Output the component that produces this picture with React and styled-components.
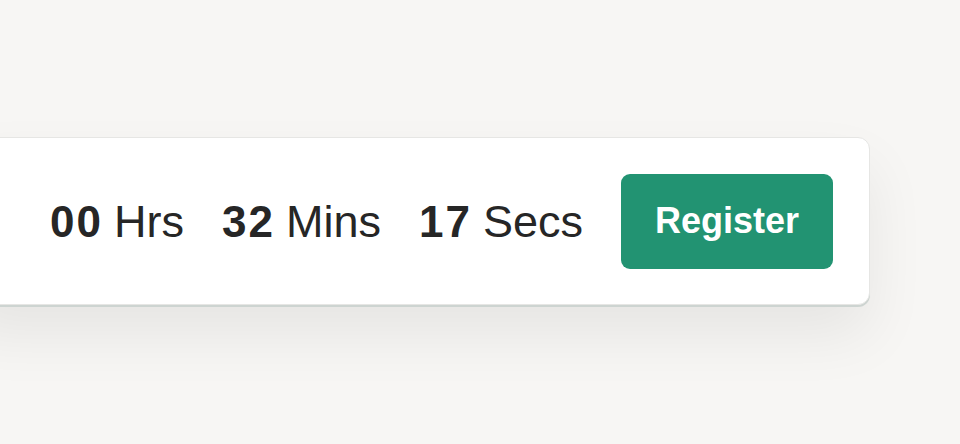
import React from 'react';
import styled, { createGlobalStyle } from 'styled-components';

const GlobalStyle = createGlobalStyle`
  html, body {
    margin: 0;
    padding: 0;
    background: #f7f6f4;
    font-family: "Liberation Sans", Arial, sans-serif;
  }
  body {
    width: 960px;
    height: 444px;
    overflow: hidden;
  }
`;

const Page = styled.div`
  padding-top: 137px;
`;

const Bar = styled.div`
  box-sizing: border-box;
  width: 910px;
  height: 168px;
  margin-left: -40px;
  padding: 0 36px 0 0;
  display: flex;
  align-items: center;
  justify-content: flex-end;
  gap: 38px;
  background: #ffffff;
  border: 1px solid #e6e6e4;
  border-radius: 12px;
  box-shadow: 0 2px 0 #cdd4d1, 0 30px 60px rgba(0, 0, 0, 0.07);
`;

const Unit = styled.div`
  display: flex;
  align-items: baseline;
  gap: 11px;
  color: #262626;
  font-size: 45px;
  line-height: 1;
  flex-shrink: 0;
`;

const Value = styled.span`
  font-size: 44px;
  font-weight: 700;
  letter-spacing: 2px;
`;

const Label = styled.span`
  font-weight: 400;
`;

const RegisterButton = styled.button`
  flex-shrink: 0;
  width: 212px;
  height: 95px;
  padding: 0;
  border: none;
  border-radius: 9px;
  background: #229372;
  color: #ffffff;
  font-family: "Liberation Sans", Arial, sans-serif;
  font-size: 36px;
  font-weight: 700;
  cursor: pointer;
`;

const units = [
  { value: '00', label: 'Hrs' },
  { value: '32', label: 'Mins' },
  { value: '17', label: 'Secs' },
];

export default function App() {
  return (
    <>
      <GlobalStyle />
      <Page>
        <Bar>
          {units.map((u) => (
            <Unit key={u.label}>
              <Value>{u.value}</Value>
              <Label>{u.label}</Label>
            </Unit>
          ))}
          <RegisterButton>Register</RegisterButton>
        </Bar>
      </Page>
    </>
  );
}
